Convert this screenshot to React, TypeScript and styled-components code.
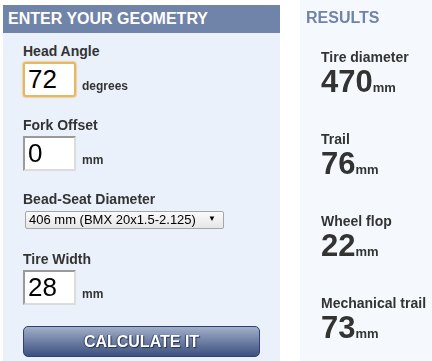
import styled, { createGlobalStyle } from "styled-components";

const GlobalStyle = createGlobalStyle`
  html, body {
    margin: 0;
    padding: 0;
    background: #ffffff;
    font-family: "Liberation Sans", Arial, sans-serif;
  }
`;

const Page = styled.div`
  display: flex;
  align-items: stretch;
  min-height: 100vh;
  overflow: hidden;
`;

const FormPanel = styled.section`
  width: 277px;
  margin: 5px 20px 0 3px;
  background: #eaf1fa;
`;

const PanelHeader = styled.h2`
  margin: 0;
  height: 28px;
  padding-left: 5px;
  background: #7083a8;
  color: #ffffff;
  font-size: 16px;
  font-weight: bold;
  line-height: 28px;
`;

const FormBody = styled.div`
  display: flex;
  flex-direction: column;
  padding: 10px 0 0 20px;
`;

const Field = styled.div<{ $gap?: number }>`
  display: flex;
  flex-direction: column;
  margin-bottom: ${({ $gap }) => $gap ?? 20}px;
`;

const Label = styled.label`
  font-size: 14px;
  font-weight: bold;
  line-height: 16px;
  color: #333333;
  margin-bottom: 3px;
`;

const InputRow = styled.div`
  display: flex;
  align-items: flex-end;
`;

const NumberInput = styled.input`
  box-sizing: border-box;
  width: 53px;
  height: 35px;
  padding: 0 3px;
  border: 2px solid;
  border-color: #9a9a9a #dcdcdc #dcdcdc #9a9a9a;
  background: #ffffff;
  font-family: "Liberation Sans", Arial, sans-serif;
  font-size: 26px;
  color: #000000;
  caret-color: #000000;

  &:focus {
    outline: none;
    border-color: #e4b866;
    border-radius: 3px;
    box-shadow: 0 0 1px 1px #f0d49c;
  }
`;

const Unit = styled.span`
  margin: 0 0 4px 6px;
  font-size: 12px;
  font-weight: bold;
  line-height: 14px;
  color: #333333;
`;

const SelectWrap = styled.div`
  position: relative;
  width: 199px;
  margin-left: 2px;
`;

const Select = styled.select`
  box-sizing: border-box;
  width: 100%;
  height: 18px;
  padding: 0 0 0 3px;
  appearance: none;
  border: 1px solid #a6a6a6;
  border-radius: 2px;
  background: linear-gradient(#fafafa, #e6e6e6);
  font-family: "Liberation Sans", Arial, sans-serif;
  font-size: 13px;
  line-height: 16px;
  color: #000000;
`;

const SelectArrow = styled.span`
  position: absolute;
  right: 8px;
  top: 3px;
  font-size: 8px;
  line-height: 12px;
  color: #000000;
  pointer-events: none;
`;

const CalcButton = styled.button`
  width: 237px;
  height: 31px;
  margin-top: 1px;
  border: 1px solid #2f4272;
  border-radius: 5px;
  background: linear-gradient(#a1aec8, #3c5080);
  color: #ffffff;
  font-family: "Liberation Sans", Arial, sans-serif;
  font-size: 16px;
  font-weight: bold;
  text-shadow: 1px 1px 1px #27324f, -1px 0 1px #3a4a70;
  cursor: pointer;
`;

const ResultsPanel = styled.section`
  flex: 1;
  padding: 8px 0 0 6px;
  background: #f5f9fd;
`;

const ResultsTitle = styled.h2`
  margin: 0 0 22px;
  font-size: 16px;
  font-weight: bold;
  line-height: 19px;
  color: #7083a8;
`;

const ResultList = styled.div`
  display: flex;
  flex-direction: column;
  gap: 27px;
  padding-left: 15px;
`;

const Result = styled.div`
  display: flex;
  flex-direction: column;
  gap: 1px;
`;

const ResultLabel = styled.span`
  font-size: 14px;
  font-weight: bold;
  line-height: 16px;
  color: #333333;
`;

const ResultValue = styled.span`
  font-size: 31px;
  font-weight: bold;
  line-height: 32px;
  color: #333333;
`;

const ResultUnit = styled.span`
  font-size: 13px;
`;

const results = [
  { label: "Tire diameter", value: 470 },
  { label: "Trail", value: 76 },
  { label: "Wheel flop", value: 22 },
  { label: "Mechanical trail", value: 73 },
];

export default function App() {
  return (
    <>
      <GlobalStyle />
      <Page>
        <FormPanel>
          <PanelHeader>ENTER YOUR GEOMETRY</PanelHeader>
          <FormBody>
            <Field>
              <Label>Head Angle</Label>
              <InputRow>
                <NumberInput defaultValue="72" autoFocus />
                <Unit>degrees</Unit>
              </InputRow>
            </Field>
            <Field>
              <Label>Fork Offset</Label>
              <InputRow>
                <NumberInput defaultValue="0" />
                <Unit>mm</Unit>
              </InputRow>
            </Field>
            <Field $gap={22}>
              <Label>Bead-Seat Diameter</Label>
              <SelectWrap>
                <Select defaultValue="406">
                  <option value="406">406 mm (BMX 20x1.5-2.125)</option>
                  <option value="559">559 mm (MTB 26")</option>
                  <option value="622">622 mm (700C / 29er)</option>
                </Select>
                <SelectArrow>▼</SelectArrow>
              </SelectWrap>
            </Field>
            <Field>
              <Label>Tire Width</Label>
              <InputRow>
                <NumberInput defaultValue="28" />
                <Unit>mm</Unit>
              </InputRow>
            </Field>
            <CalcButton>CALCULATE IT</CalcButton>
          </FormBody>
        </FormPanel>
        <ResultsPanel>
          <ResultsTitle>RESULTS</ResultsTitle>
          <ResultList>
            {results.map((r) => (
              <Result key={r.label}>
                <ResultLabel>{r.label}</ResultLabel>
                <ResultValue>
                  {r.value}
                  <ResultUnit>mm</ResultUnit>
                </ResultValue>
              </Result>
            ))}
          </ResultList>
        </ResultsPanel>
      </Page>
    </>
  );
}
